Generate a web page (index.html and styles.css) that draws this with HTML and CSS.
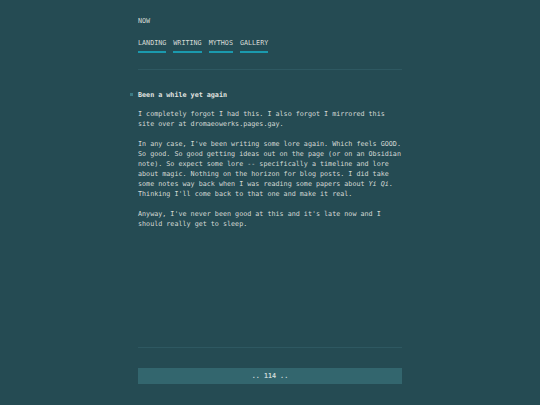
FILE: index.html
```
<!DOCTYPE html>
<html lang="en">
<head>
<meta charset="utf-8">
<title>Now</title>
<link rel="stylesheet" href="styles.css">
</head>
<body>
<div class="page">
  <header class="site-header">
    <div class="site-title">NOW</div>
    <nav class="nav">
      <a class="nav-link" href="#">LANDING</a>
      <a class="nav-link" href="#">WRITING</a>
      <a class="nav-link" href="#">MYTHOS</a>
      <a class="nav-link" href="#">GALLERY</a>
    </nav>
  </header>
  <hr class="rule rule-top">
  <main class="content">
    <h2 class="post-title">Been a while yet again</h2>
    <p class="para">I completely forgot I had this. I also forgot I mirrored this site over at dromaeowerks.pages.gay.</p>
    <p class="para">In any case, I've been writing some lore again. Which feels GOOD. So good. So good getting ideas out on the page (or on an Obsidian note). So expect some lore -- specifically a timeline and lore about magic. Nothing on the horizon for blog posts. I did take some notes way back when I was reading some papers about <em>Yi Qi</em>. Thinking I'll come back to that one and make it real.</p>
    <p class="para">Anyway, I've never been good at this and it's late now and I should really get to sleep.</p>
  </main>
  <hr class="rule rule-bottom">
  <footer class="pager">.. 114 ..</footer>
</div>
</body>
</html>
```
FILE: styles.css
```
html, body {
  margin: 0;
  padding: 0;
}
body {
  background: #254b53;
  color: #d6dad6;
  font-family: "DejaVu Sans Mono", "Liberation Mono", monospace;
  font-size: 6.72px;
  line-height: 10px;
}
.page {
  width: 264px;
  margin: 0 auto;
}
.site-header {
  padding-top: 16px;
}
.site-title {
  color: #d6dad6;
}
.nav {
  display: flex;
  gap: 7px;
  margin-top: 12px;
}
.nav-link {
  color: #d6dad6;
  text-decoration: none;
  padding-bottom: 3px;
  border-bottom: 2px solid #1b9aae;
}
.rule {
  border: 0;
  height: 1px;
  background: #2e5861;
  margin: 0;
}
.rule-top {
  margin-top: 16px;
}
.content {
  box-sizing: border-box;
  height: 277px;
  padding-top: 20px;
}
.post-title {
  position: relative;
  margin: 0 0 9px;
  font-size: 6.72px;
  line-height: 10px;
  font-weight: bold;
  color: #e2e4e0;
}
.post-title::before {
  content: "";
  position: absolute;
  left: -8px;
  top: 3px;
  width: 3px;
  height: 3px;
  background: #3c7a83;
}
.para {
  margin: 0 0 10px;
}
.para em {
  font-style: italic;
}
.pager {
  margin-top: 20px;
  height: 16px;
  line-height: 16px;
  background: #33666e;
  text-align: center;
  color: #c9d6d6;
  font-weight: bold;
}
```
